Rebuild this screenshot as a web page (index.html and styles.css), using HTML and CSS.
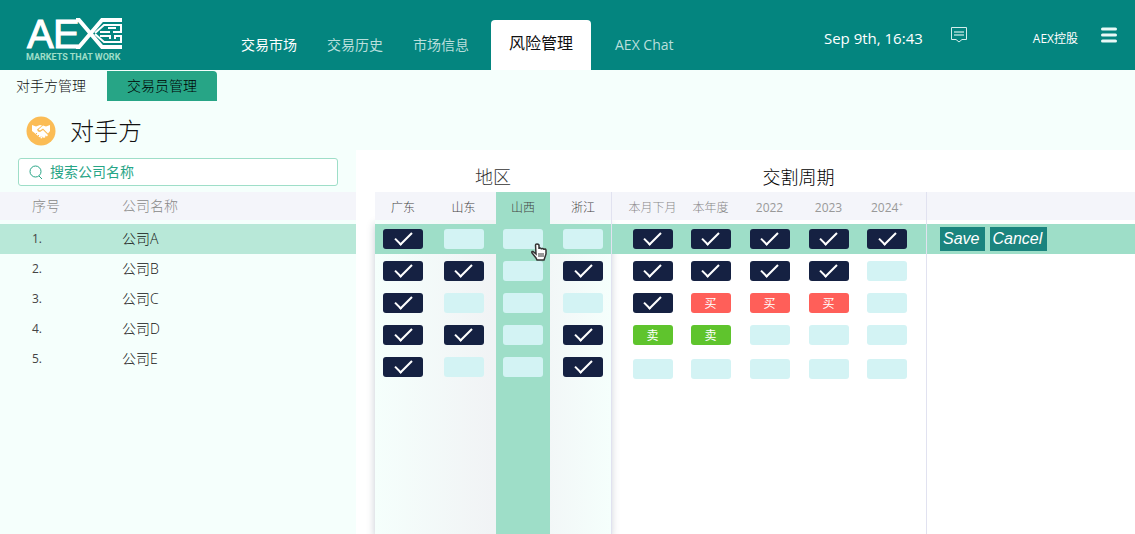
FILE: index.html
```html
<!DOCTYPE html>
<html lang="zh-CN">
<head>
<meta charset="utf-8">
<meta name="viewport" content="width=device-width, initial-scale=1">
<title>AEX 风险管理</title>
<link rel="stylesheet" href="styles.css">
</head>
<body>
<header class="topbar">
  <a class="logo" href="#" aria-label="AEX">
    <svg class="logo-mark" width="96" height="32" viewBox="0 0 96 32">
      <text class="logo-letters" x="1 27" y="30">AE</text>
      <g fill="none" stroke="#fff">
        <path stroke-width="4" d="M50 2h3L76 29H96M50 29h3L76 2H96"/>
        <path stroke-width="2" d="M69 15L78 7H96M74 14H84M82 10H90M95 6V14H87M69 16L78 24H96M74 18H84V21M95 18V25M88 18H96M89 18V21"/>
      </g>
    </svg>
    <span class="tagline">MARKETS THAT WORK</span>
  </a>
  <nav class="nav">
    <a class="nav-item strong" href="#">交易市场</a>
    <a class="nav-item" href="#">交易历史</a>
    <a class="nav-item" href="#">市场信息</a>
    <a class="nav-item active" href="#" aria-current="page">风险管理</a>
    <a class="nav-item" href="#">AEX Chat</a>
  </nav>
  <div class="status">
    <time class="clock">Sep 9th, 16:43</time>
    <button class="icon-btn message" aria-label="消息">
      <svg width="16" height="16" viewBox="0 0 16 16" fill="none" stroke="#d5efec"><path d="M.5.5h15v12H11l-3 2.500-3-2.500H.5z"/><path stroke="#7fc4bf" stroke-width="2" d="M3 5h10M3 8h10"/></svg>
    </button>
    <span class="account">AEX控股</span>
    <button class="icon-btn" aria-label="菜单">
      <svg width="16" height="16" viewBox="0 0 16 16" stroke="#e9f9f7" stroke-width="3" stroke-linecap="round"><path d="M1.500 2h13M1.500 8h13M1.500 14h13"/></svg>
    </button>
  </div>
</header>

<nav class="subnav">
  <a class="subnav-item" href="#">对手方管理</a>
  <a class="subnav-item active" href="#">交易员管理</a>
</nav>

<main class="layout">
  <section class="companies">
    <div class="heading">
      <svg width="30" height="30" viewBox="0 0 30 30">
        <circle cx="15" cy="15" r="14.500" fill="#fbbc55"/>
        <path fill="#fff" d="M6 9l4 1.500 4-1.500 2 .5-5 4 1 2 2 .5 3-2 5 5-1 1.500-2-1 .5 1.500-1.500 1-2-1.500.5 1.500-1.500.5-7-6L6 15zM24 9v6l-2 2.500-5-5-3 2-1.500-1L17 9.500l3 1z"/>
        <path stroke="#fbbc55" fill="none" d="M9 19l2-2M11 21l2-2M13 22.500l2-2"/>
      </svg>
      <h1>对手方</h1>
    </div>
    <label class="search">
      <svg width="14" height="14" viewBox="0 0 14 14" fill="none" stroke="#27a586"><circle cx="6.500" cy="6.500" r="5.500"/><path d="M10 11l3 3"/></svg>
      <input type="search" placeholder="搜索公司名称" aria-label="搜索公司名称">
    </label>
    <table class="list">
      <thead><tr><th class="no">序号</th><th>公司名称</th></tr></thead>
      <tbody>
        <tr class="selected"><td>1.</td><td>公司A</td></tr>
        <tr><td>2.</td><td>公司B</td></tr>
        <tr><td>3.</td><td>公司C</td></tr>
        <tr><td>4.</td><td>公司D</td></tr>
        <tr><td>5.</td><td>公司E</td></tr>
      </tbody>
    </table>
  </section>

  <section class="panel">
    <table class="matrix">
      <colgroup><col class="c-a"><col class="c-b"><col class="c-c"><col class="c-d"><col class="c-e"><col class="c-f"><col class="c-f"><col class="c-f"><col class="c-g"><col></colgroup>
      <thead>
        <tr class="titles"><th colspan="4">地区</th><th colspan="5" class="period-title">交割周期</th><th></th></tr>
        <tr class="labels"><th>广东</th><th>山东</th><th class="hot">山西</th><th class="last">浙江</th><th class="line first">本月下月</th><th>本年度</th><th>2022</th><th>2023</th><th class="end">2024<sup>+</sup></th><th class="line"></th></tr>
        <tr class="gap"><td></td><td></td><td class="hot"></td><td></td><td class="line"></td><td></td><td></td><td></td><td></td><td class="line"></td></tr>
      </thead>
      <tbody>
        <tr class="selected">
          <td><input type="checkbox" aria-label="公司A 广东" checked></td>
          <td><input type="checkbox" aria-label="公司A 山东"></td>
          <td class="hot"><div class="hover-cell"><input type="checkbox" aria-label="公司A 山西">
            <svg class="pointer" width="16" height="18" viewBox="0 0 16 18"><path fill="#fff" stroke="#333" stroke-width="1.500" d="M5 11L2 8.500C.5 8 .5 9.500 1.500 10.500L5 15l1 2h7l1-3 1-3V7c-.5-1.500-2-1-2 0 0-2-2.500-2-2.500-.5 0-2-2.500-2-2.500-.5V2C7 .5 4.500.5 4.500 2z"/><path stroke="#333" d="M8 10v4M10 10v4M12 10v4"/></svg></div></td>
          <td class="last"><input type="checkbox" aria-label="公司A 浙江"></td>
          <td class="line first"><input type="checkbox" aria-label="公司A 本月下月" checked></td>
          <td><input type="checkbox" aria-label="公司A 本年度" checked></td>
          <td><input type="checkbox" aria-label="公司A 2022" checked></td>
          <td><input type="checkbox" aria-label="公司A 2023" checked></td>
          <td class="end"><input type="checkbox" aria-label="公司A 2024+" checked></td>
          <td class="line"><div class="actions"><button class="action">Save</button><button class="action">Cancel</button></div></td>
        </tr>
        <tr class="pad"><td></td><td></td><td class="hot"></td><td></td><td class="line"></td><td></td><td></td><td></td><td></td><td class="line"></td></tr>
        <tr>
          <td><input type="checkbox" aria-label="公司B 广东" checked></td>
          <td><input type="checkbox" aria-label="公司B 山东" checked></td>
          <td class="hot"><input type="checkbox" aria-label="公司B 山西"></td>
          <td class="last"><input type="checkbox" aria-label="公司B 浙江" checked></td>
          <td class="line first"><input type="checkbox" aria-label="公司B 本月下月" checked></td>
          <td><input type="checkbox" aria-label="公司B 本年度" checked></td>
          <td><input type="checkbox" aria-label="公司B 2022" checked></td>
          <td><input type="checkbox" aria-label="公司B 2023" checked></td>
          <td class="end"><input type="checkbox" aria-label="公司B 2024+"></td>
          <td class="line"></td>
        </tr>
        <tr>
          <td><input type="checkbox" aria-label="公司C 广东" checked></td>
          <td><input type="checkbox" aria-label="公司C 山东"></td>
          <td class="hot"><input type="checkbox" aria-label="公司C 山西"></td>
          <td class="last"><input type="checkbox" aria-label="公司C 浙江"></td>
          <td class="line first"><input type="checkbox" aria-label="公司C 本月下月" checked></td>
          <td><button class="side buy">买</button></td>
          <td><button class="side buy">买</button></td>
          <td><button class="side buy">买</button></td>
          <td class="end"><input type="checkbox" aria-label="公司C 2024+"></td>
          <td class="line"></td>
        </tr>
        <tr>
          <td><input type="checkbox" aria-label="公司D 广东" checked></td>
          <td><input type="checkbox" aria-label="公司D 山东" checked></td>
          <td class="hot"><input type="checkbox" aria-label="公司D 山西"></td>
          <td class="last"><input type="checkbox" aria-label="公司D 浙江" checked></td>
          <td class="line first"><button class="side sell">卖</button></td>
          <td><button class="side sell">卖</button></td>
          <td><input type="checkbox" aria-label="公司D 2022"></td>
          <td><input type="checkbox" aria-label="公司D 2023"></td>
          <td class="end"><input type="checkbox" aria-label="公司D 2024+"></td>
          <td class="line"></td>
        </tr>
        <tr>
          <td><input type="checkbox" aria-label="公司E 广东" checked></td>
          <td><input type="checkbox" aria-label="公司E 山东"></td>
          <td class="hot"><input type="checkbox" aria-label="公司E 山西"></td>
          <td class="last"><input type="checkbox" aria-label="公司E 浙江" checked></td>
          <td class="line first low"><input type="checkbox" aria-label="公司E 本月下月"></td>
          <td class="low"><input type="checkbox" aria-label="公司E 本年度"></td>
          <td class="low"><input type="checkbox" aria-label="公司E 2022"></td>
          <td class="low"><input type="checkbox" aria-label="公司E 2023"></td>
          <td class="end low"><input type="checkbox" aria-label="公司E 2024+"></td>
          <td class="line"></td>
        </tr>
        <tr class="fill"><td></td><td></td><td class="hot"></td><td></td><td class="line"></td><td></td><td></td><td></td><td></td><td class="line"></td></tr>
      </tbody>
    </table>
  </section>
</main>
</body>
</html>
```
FILE: styles.css
```css
* { box-sizing: border-box; }

body {
  margin: 0;
  min-height: 100vh;
  display: flex;
  flex-direction: column;
  background: #f5fffc;
  color: #111;
  font: 14px/20px "Open Sans", "Noto Sans CJK SC", sans-serif;
}

a { color: inherit; text-decoration: none; }
button { font: inherit; border: 0; padding: 0; cursor: pointer; }
svg { display: block; flex: none; }

/* Top bar */
.topbar {
  display: flex;
  align-items: flex-end;
  height: 70px;
  padding: 0 18px 0 26px;
  background: #04857f;
  color: #fff;
}
.logo { width: 96px; padding-bottom: 8px; }
.logo-mark { overflow: visible; }
.logo-letters { font: 40px "Liberation Sans", sans-serif; fill: #fff; stroke: #fff; }
.tagline {
  display: block;
  padding-top: 2px;
  color: #9edec8;
  font: bold 9px/10px Roboto, sans-serif;
  white-space: nowrap;
}
.nav { display: flex; align-items: flex-end; margin-left: 104px; }
.nav-item {
  height: 50px;
  padding: 0 15px;
  line-height: 50px;
  color: #b9dfdc;
  white-space: nowrap;
}
.nav-item.strong { color: #fff; }
.nav-item.active {
  margin: 0 9px 0 7px;
  padding: 0 18px;
  border-radius: 4px 4px 0 0;
  background: #fff;
  color: #111;
  font-size: 16px;
  line-height: 46px;
}
.status {
  display: flex;
  align-items: center;
  margin-left: auto;
  padding-bottom: 20px;
  height: 50px;
  white-space: nowrap;
}
.clock { font-size: 15px; padding-top: 6px; }
.icon-btn { background: none; }
.message { margin: 0 66px 0 28px; }
.account { margin-right: 23px; font-size: 12px; padding-top: 7px; }

/* Section tabs */
.subnav { display: flex; gap: 1px; padding-top: 1px; font-weight: 300; }
.subnav-item { padding: 0 20px; line-height: 30px; }
.subnav-item:first-child { padding-left: 16px; }
.subnav-item.active { border-radius: 0 4px 0 0; background: #27a586; color: #000; }

.layout { flex: 1; display: flex; }

/* Company list */
.companies { flex: none; width: 356px; padding-top: 12px; }
.heading { display: flex; align-items: center; gap: 14px; padding-left: 26px; height: 36px; }
.heading h1 { margin: 0; font-size: 24px; font-weight: 300; line-height: 36px; }
.search {
  display: flex;
  align-items: center;
  gap: 7px;
  height: 28px;
  margin: 9px 18px 6px;
  padding: 0 10px;
  border: 1px solid #9edec8;
  border-radius: 3px;
  background: #fff;
}
.search input {
  flex: 1;
  min-width: 0;
  padding: 0;
  border: 0;
  outline: 0;
  background: none;
  font: inherit;
}
.search input::placeholder { color: #27a586; }
.list { width: 100%; border-collapse: separate; border-spacing: 0; font-weight: 300; }
.list th {
  height: 32px;
  padding: 0;
  border-bottom: 4px solid #f5fffc;
  background: #f4f5fa;
  color: #888;
  font-weight: 300;
  text-align: left;
}
.list .no { width: 122px; }
.list td { height: 30px; padding: 0; }
.list th:first-child, .list td:first-child { padding-left: 32px; }
.list td:first-child { color: #444; font-size: 12px; font-weight: 400; }
.list .selected { background: #b8e8d8; }

/* Permission matrix */
.panel {
  position: relative;
  flex: 1;
  min-width: 0;
  display: flex;
  flex-direction: column;
  margin-top: 49px;
  padding-left: 19px;
  overflow: hidden;
  background: #fff;
}
.panel::before {
  content: "";
  position: absolute;
  top: 70px;
  bottom: 0;
  left: 19px;
  width: 236px;
  background: linear-gradient(90deg, #f5fffc, #f1f3f5 50%, #f1f3f5 62%, #f5fffc);
  box-shadow: 0 4px 8px rgba(30, 50, 80, .25);
}
.matrix {
  position: relative;
  flex: 1;
  width: 100%;
  table-layout: fixed;
  border-collapse: separate;
  border-spacing: 0;
}
.c-a { width: 56px; }
.c-b { width: 65px; }
.c-c { width: 54px; }
.c-d { width: 61px; }
.c-e { width: 70px; }
.c-f { width: 59px; }
.c-g { width: 68px; }
.matrix th, .matrix td {
  height: 32px;
  padding: 0;
  text-align: center;
  vertical-align: middle;
  font-weight: 400;
  line-height: 20px;
  white-space: nowrap;
}
.matrix .titles th { height: 42px; padding-top: 12px; color: #333; font-size: 18px; font-weight: 300; }
.matrix .titles .period-title { padding-left: 60px; color: #000; }
.matrix .labels th { height: 28px; padding-top: 3px; background: #f4f5fa; color: #888; font-size: 12px; font-weight: 300; }
.matrix .labels th:nth-child(-n+4) { color: #444; }
.matrix .labels th:nth-child(n+7) { font-weight: 400; color: #999; }
.matrix .gap td { height: 4px; }
.matrix .pad td { height: 1px; }
.matrix .fill td { height: auto; }
.matrix .selected td { height: 30px; background: #9edec8; }
.matrix .hot, .matrix .labels .hot { background: #9edec8; }
.matrix .line { border-left: 1px solid #e1e2f0; }
.matrix .last { padding-left: 5px; }
.matrix .first { padding-left: 12px; }
.matrix .end { padding-right: 10px; }
.matrix .low { padding-top: 4px; }
.matrix sup { font-size: 8px; line-height: 8px; }

.matrix input {
  appearance: none;
  display: block;
  width: 40px;
  height: 20px;
  margin: 0 auto;
  border-radius: 3px;
  background: #d3f3f4;
}
.matrix input:checked {
  display: flex;
  justify-content: center;
  align-items: center;
  padding-bottom: 5px;
  background: #152142;
}
.matrix input:checked::before {
  content: "";
  width: 7px;
  height: 15px;
  border: solid #fff;
  border-width: 0 2px 2px 0;
  transform: rotate(45deg);
}
.side {
  display: block;
  width: 40px;
  height: 20px;
  margin: 0 auto;
  padding-top: 1px;
  border-radius: 3px;
  color: #fff;
  font-size: 12px;
  line-height: 19px;
}
.buy { background: #ff5f59; }
.sell { background: #5fc42d; }

.hover-cell { position: relative; }
.pointer { position: absolute; left: 35px; top: 14px; z-index: 1; }

.actions { display: flex; gap: 5px; padding-left: 13px; }
.action {
  height: 24px;
  padding: 0 5px 0 3px;
  background: #1b847e;
  color: #fff;
  font: italic 16px/24px "Liberation Sans", sans-serif;
}
```
